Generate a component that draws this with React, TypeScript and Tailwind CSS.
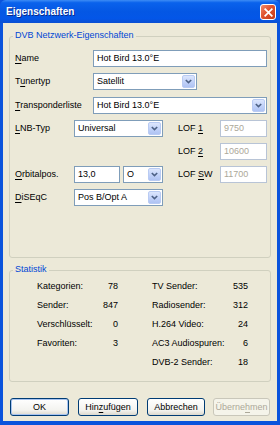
import React from "react";

const F = { fontFamily: '"Liberation Sans", Arial, sans-serif' };

function U({ children }: { children: React.ReactNode }) {
  return <span className="underline underline-offset-[1.5px] decoration-[1px]">{children}</span>;
}

function Arrow() {
  return (
    <div className="flex h-full w-[13px] items-center justify-center rounded-[2px] border border-[#B9CBF3] bg-[linear-gradient(to_bottom,#DCE6FD,#BFD0F8_60%,#AFC3F3)]">
      <svg width="7" height="5" viewBox="0 0 7 5">
        <path d="M0.8 1 L3.5 3.6 L6.2 1" fill="none" stroke="#4D6185" strokeWidth="1.6" />
      </svg>
    </div>
  );
}

function Combo({ value, w }: { value: string; w: string }) {
  return (
    <div className={`flex h-[17px] ${w} items-stretch border border-[#7F9DB9] bg-white p-[1px]`}>
      <div className="flex flex-1 items-center pl-[2px] text-[9px] leading-none text-black">{value}</div>
      <Arrow />
    </div>
  );
}

function TextInput({ value, w, disabled }: { value: string; w: string; disabled?: boolean }) {
  return (
    <div
      className={`flex h-[17px] ${w} items-center border bg-white pl-[3px] text-[9px] leading-none ${
        disabled ? "border-[#B8C4D6] text-[#ACA899]" : "border-[#7F9DB9] text-black"
      }`}
    >
      {value}
    </div>
  );
}

function Label({ children, w }: { children: React.ReactNode; w: string }) {
  return <div className={`${w} shrink-0 text-[9px] leading-none text-black`}>{children}</div>;
}

function Group({ title, className, children }: { title: string; className: string; children: React.ReactNode }) {
  return (
    <div className={`relative rounded-[3px] border border-[#D0D0BF] ${className}`}>
      <span className="absolute left-[3px] top-[-7px] bg-[#ECE9D8] px-[2px] text-[9px] leading-[11px] text-[#0046D5]">
        {title}
      </span>
      {children}
    </div>
  );
}

function Stat({ label, value, w }: { label: string; value: string; w: string }) {
  return (
    <div className={`flex ${w} items-center justify-between text-[9px] leading-none text-black`}>
      <span>{label}</span>
      <span>{value}</span>
    </div>
  );
}

function Btn({ children, w, primary, disabled }: { children: React.ReactNode; w: string; primary?: boolean; disabled?: boolean }) {
  return (
    <div
      className={`flex h-[18px] ${w} items-center justify-center rounded-[3px] border text-[9px] leading-none ${
        disabled
          ? "border-[#C9C7BA] bg-[#F5F4EA] text-[#ACA899]"
          : "border-[#003C74] bg-[linear-gradient(to_bottom,#FFFFFF,#F3F3EF_70%,#DCD9CE)] text-black"
      } ${primary ? "shadow-[inset_0_0_0_1px_#A8C4F0]" : ""}`}
    >
      {children}
    </div>
  );
}

export default function App() {
  return (
    <div style={F} className="flex h-[425px] w-[280px] flex-col bg-[#0A53DC]">
      {/* Title bar */}
      <div className="relative flex h-[23px] shrink-0 items-center rounded-t-[6px] bg-[linear-gradient(to_bottom,#3D8CF5_0%,#0A62EC_12%,#0457E4_50%,#0356E8_80%,#0A4FD2_100%)] px-[6px]">
        <span className="text-[10px] font-bold leading-none text-white [text-shadow:1px_1px_#0A2A8C]">Eigenschaften</span>
        <div className="absolute right-[4px] top-[4px] flex h-[16px] w-[16px] items-center justify-center rounded-[3px] border border-white bg-[linear-gradient(135deg,#F08B6C,#E0522E_45%,#C23A17)]">
          <svg width="9" height="9" viewBox="0 0 9 9">
            <path d="M1.2 1.2 L7.8 7.8 M7.8 1.2 L1.2 7.8" stroke="white" strokeWidth="1.7" strokeLinecap="square" />
          </svg>
        </div>
      </div>

      {/* Client area */}
      <div className="mx-[3px] mb-[4px] flex flex-1 flex-col bg-[#ECE9D8] px-[6px] pt-[13px]">
        <Group title="DVB Netzwerk-Eigenschaften" className="h-[222px] pl-[5px] pt-[13px]">
          <div className="flex flex-col">
            <div className="flex items-center">
              <Label w="w-[78px]"><U>N</U>ame</Label>
              <TextInput value="Hot Bird 13.0°E" w="w-[174px]" />
            </div>
            <div className="mt-[6px] flex items-center">
              <Label w="w-[78px]">T<U>u</U>nertyp</Label>
              <Combo value="Satellit" w="w-[104px]" />
            </div>
            <div className="mt-[7px] flex items-center">
              <Label w="w-[78px]"><U>T</U>ransponderliste</Label>
              <Combo value="Hot Bird 13.0°E" w="w-[174px]" />
            </div>
            <div className="mt-[6px] grid grid-cols-[59px_89px_15px_42px_47px] grid-rows-[17px_17px_17px_17px] gap-y-[6px] items-center">
              <Label w="w-auto"><U>L</U>NB-Typ</Label>
              <Combo value="Universal" w="w-[89px]" />
              <div />
              <Label w="w-auto">LOF <U>1</U></Label>
              <TextInput value="9750" w="w-[47px]" disabled />

              <div />
              <div />
              <div />
              <Label w="w-auto">LOF <U>2</U></Label>
              <TextInput value="10600" w="w-[47px]" disabled />

              <Label w="w-auto"><U>O</U>rbitalpos.</Label>
              <div className="flex gap-[3px]">
                <TextInput value="13,0" w="w-[46px]" />
                <Combo value="O" w="w-[40px]" />
              </div>
              <div />
              <Label w="w-auto">LOF <U>S</U>W</Label>
              <TextInput value="11700" w="w-[47px]" disabled />

              <Label w="w-auto"><U>D</U>iSEqC</Label>
              <Combo value="Pos B/Opt A" w="w-[89px]" />
              <div />
              <div />
              <div />
            </div>
          </div>
        </Group>

        <Group title="Statistik" className="mt-[12px] h-[112px] pl-[27px] pt-[6px]">
          <div className="flex gap-[34px]">
            <div className="flex flex-col">
              <div className="flex h-[19px] items-center"><Stat label="Kategorien:" value="78" w="w-[81px]" /></div>
              <div className="flex h-[19px] items-center"><Stat label="Sender:" value="847" w="w-[81px]" /></div>
              <div className="flex h-[19px] items-center"><Stat label="Verschlüsselt:" value="0" w="w-[81px]" /></div>
              <div className="flex h-[19px] items-center"><Stat label="Favoriten:" value="3" w="w-[81px]" /></div>
            </div>
            <div className="flex flex-col">
              <div className="flex h-[19px] items-center"><Stat label="TV Sender:" value="535" w="w-[96px]" /></div>
              <div className="flex h-[19px] items-center"><Stat label="Radiosender:" value="312" w="w-[96px]" /></div>
              <div className="flex h-[19px] items-center"><Stat label="H.264 Video:" value="24" w="w-[96px]" /></div>
              <div className="flex h-[19px] items-center"><Stat label="AC3 Audiospuren:" value="6" w="w-[96px]" /></div>
              <div className="flex h-[19px] items-center"><Stat label="DVB-2 Sender:" value="18" w="w-[96px]" /></div>
            </div>
          </div>
        </Group>

        <div className="mt-[16px] flex pl-[1px]">
          <Btn w="w-[59px]" primary>OK</Btn>
          <div className="w-[9px]" />
          <Btn w="w-[60px]">Hin<U>z</U>ufügen</Btn>
          <div className="w-[9px]" />
          <Btn w="w-[58px]">Abbrechen</Btn>
          <div className="w-[8px]" />
          <Btn w="w-[57px]" disabled>Überne<U>h</U>men</Btn>
        </div>
      </div>
    </div>
  );
}
